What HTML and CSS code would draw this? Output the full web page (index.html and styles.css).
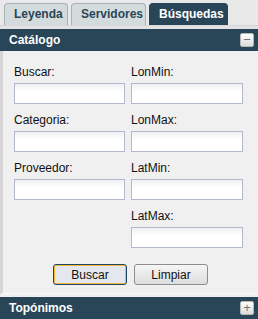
FILE: index.html
```html
<!DOCTYPE html>
<html lang="es">
<head>
  <meta charset="UTF-8" />
  <title>Búsquedas</title>
  <link rel="stylesheet" href="styles.css">
</head>
<body>
  <div class="tabs">
    <div class="tab">Leyenda</div>
    <div class="tab">Servidores</div>
    <div class="tab activa">Búsquedas</div>
  </div>
  <div class="separador"></div>

  <div class="panel">
    <div class="panel-cabecera">
      <span>Catálogo</span>
      <span class="plegar">&minus;</span>
    </div>
    <div class="panel-cuerpo">
      <form class="campos">
        <div class="campo">
          <label>Buscar:</label>
          <input type="text">
        </div>
        <div class="campo">
          <label>LonMin:</label>
          <input type="text">
        </div>
        <div class="campo">
          <label>Categoria:</label>
          <input type="text">
        </div>
        <div class="campo">
          <label>LonMax:</label>
          <input type="text">
        </div>
        <div class="campo">
          <label>Proveedor:</label>
          <input type="text">
        </div>
        <div class="campo">
          <label>LatMin:</label>
          <input type="text">
        </div>
        <div class="campo"></div>
        <div class="campo">
          <label>LatMax:</label>
          <input type="text">
        </div>
      </form>
      <div class="botones">
        <button class="boton foco">Buscar</button>
        <button class="boton">Limpiar</button>
      </div>
    </div>
  </div>

  <div class="panel">
    <div class="panel-cabecera">
      <span>Topónimos</span>
      <span class="plegar">+</span>
    </div>
  </div>
</body>
</html>
```

FILE: styles.css
```css
body {
  margin: 0;
  background: #f0f0f0;
  font-family: 'Liberation Sans', Arial, sans-serif;
  font-size: 12px;
  color: #111;
  overflow: hidden;
}
.tabs {
  display: flex;
  gap: 3px;
  padding: 3px 0 0 4px;
  height: 22px;
  background: #e9e9e9;
  border-bottom: 1px solid #d6d6d6;
}
.tab {
  box-sizing: border-box;
  height: 22px;
  padding: 0 9px;
  line-height: 21px;
  font-weight: 700;
  font-size: 12px;
  color: #284657;
  background: #d4dbdd;
  border: 1px solid #a9b1b5;
  border-bottom: none;
  border-radius: 4px 4px 0 0;
}
.tab:nth-child(1) { width: 64px; }
.tab:nth-child(2) { width: 75px; }
.tab.activa {
  width: 79px;
  background: #284657;
  border-color: #284657;
  color: #fff;
}
.separador {
  height: 3px;
  background: #e2e2e2;
}
.panel-cabecera {
  display: flex;
  align-items: center;
  justify-content: space-between;
  height: 22px;
  padding: 0 4px 0 9px;
  background: #284657;
  color: #fff;
  font-weight: 700;
  font-size: 12px;
}
.plegar {
  box-sizing: border-box;
  width: 14px;
  height: 14px;
  background: linear-gradient(#ffffff, #dcdcdc);
  border: 1px solid #b8b8b8;
  border-radius: 2px;
  color: #777;
  font-size: 13px;
  font-weight: 400;
  line-height: 11px;
  text-align: center;
}
.panel-cuerpo {
  border-left: 3px solid #d6d6d6;
  border-bottom: 1px solid #fafafa;
  padding: 14px 0 8px 11px;
  margin-bottom: 3px;
}
.campos {
  display: grid;
  grid-template-columns: 111px 112px;
  column-gap: 6px;
  margin: 0;
}
.campo {
  height: 48px;
}
.campo label {
  display: block;
  height: 14px;
  line-height: 14px;
  margin-bottom: 4px;
}
.campo input {
  box-sizing: border-box;
  width: 100%;
  height: 21px;
  margin: 0;
  border: 1px solid #b3b9cc;
  background: linear-gradient(#eef0f2, #ffffff 40%);
  font-family: inherit;
}
.botones {
  display: flex;
  justify-content: center;
  gap: 7px;
  margin: 7px 11px 0 0;
}
.boton {
  box-sizing: border-box;
  width: 74px;
  height: 21px;
  padding: 0;
  font-family: inherit;
  font-size: 12px;
  color: #111;
  border: 1px solid #8d8d8d;
  border-radius: 3px;
  background: linear-gradient(#f6f6f6, #dddddd);
}
.boton.foco {
  border: 1px solid #1d4764;
  box-shadow: inset 0 0 0 1px #f4b73a;
  background: #e4e8ee;
}
```
